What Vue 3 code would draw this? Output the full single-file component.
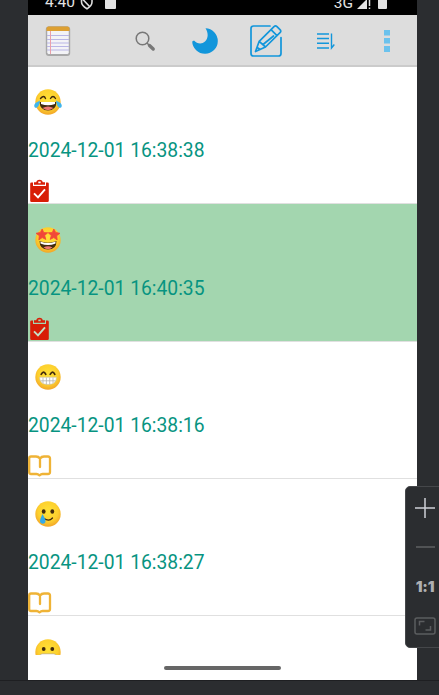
<script setup>
const notes = [
  { mood: 'joy', date: '2024-12-01 16:38:38', kind: 'task' },
  { mood: 'star', date: '2024-12-01 16:40:35', kind: 'task', selected: true },
  { mood: 'beam', date: '2024-12-01 16:38:16', kind: 'book' },
  { mood: 'tear', date: '2024-12-01 16:38:27', kind: 'book' },
  { mood: 'grimace' },
]
</script>

<template>
  <div class="emulator">
    <main class="screen">
      <header class="status">
        <span class="clock">4:40</span>
        <svg class="blocked" width="14" height="15" viewBox="0 0 14 15" fill="none" stroke="#ddd" stroke-width="1.6">
          <path d="M1.500 3.500 7 1l5 2.500V7c0 3-2 5-5 6.800C4 12 1.500 10 1.500 7ZM2.500 4l7.500 8" />
        </svg>
        <i class="card"></i>
        <span class="network">3G</span>
        <svg class="signal" width="14" height="12" viewBox="0 0 14 12">
          <path d="M0 11 10 1v10Z" fill="#e5e5e5" />
          <path d="M12.500 2v6M12.500 9.500v1.500" stroke="#e5e5e5" stroke-width="1.500" />
        </svg>
        <i class="battery"></i>
      </header>

      <nav class="toolbar">
        <svg width="26" height="32" viewBox="0 0 26 32">
          <rect x=".8" y="1.500" width="24.400" height="29.500" rx="3" fill="#858585" opacity=".6" />
          <rect x="1.800" y="2" width="22.400" height="27.500" rx="2" fill="#f3f3f6" stroke="#999" stroke-width=".7" />
          <path d="M1.500 6V3.500q0-2 2-2h19q2 0 2 2V6Z" fill="#dda032" />
          <path d="M2 10.500h22M2 14.500h22M2 18h22M2 21.500h22M2 25h22" stroke="#b9b6e6" />
          <path d="M5.500 6v23" stroke="#eba0aa" />
        </svg>
        <svg width="22" height="22" viewBox="0 0 22 22" fill="none" stroke="#777">
          <circle cx="8.500" cy="8.500" r="6.300" stroke-width="1.500" />
          <path d="m13 13 2.500 2.500" stroke-width="1.500" />
          <path d="m15.500 15.500 3.700 3.500" stroke-width="3.400" stroke-linecap="round" />
        </svg>
        <svg width="28" height="28" viewBox="0 0 28 28">
          <path d="M14.500 1.200A12.800 12.800 0 1 1 1.200 14.500L3 13.500C6 17 11 17.500 14 14.500 17.500 11 17.500 6 14.500 1.200Z" fill="#1296db" />
        </svg>
        <svg width="34" height="34" viewBox="0 0 34 34" fill="none" stroke="#1296db" stroke-width="1.700" stroke-linejoin="round" stroke-linecap="round">
          <path d="M21 2H4.500Q2 2 2 4.500v25Q2 32 4.500 32h25q2.500 0 2.500-2.500V13.500" />
          <path d="m6.500 27.500 3.700-10.200L25 2.700q1.500-1.500 3 0l3 3q1.500 1.500 0 3L16.500 23ZM22 5.700l6 6M10.200 17.300l6.300 5.700M24.500 12 14 20.500M9 24l2 1.500" />
        </svg>
        <svg width="20" height="18" viewBox="0 0 20 18" fill="none" stroke="#1296db" stroke-width="1.400">
          <path d="M1 2h12M1 6.500h12M1 11.300h12M1 16h12M15.500 1.500v14.500L18.300 12.500" />
        </svg>
        <svg width="8" height="24" viewBox="0 0 8 24" fill="#6bc2ed">
          <path d="M1 1h6v5.500H1zM1 9h6v5.500H1zM1 17h6v6H1z" />
        </svg>
      </nav>

      <section class="list">
        <article v-for="note in notes" :key="note.mood" class="note" :class="{ selected: note.selected }">
          <svg class="face" width="28" height="28" viewBox="0 0 28 28">
            <defs>
              <radialGradient :id="note.mood" cx=".5" cy=".4" r=".6">
                <stop offset="0" stop-color="#ffe236" />
                <stop offset=".65" stop-color="#fdd02e" />
                <stop offset="1" stop-color="#f2a629" />
              </radialGradient>
            </defs>
            <circle cx="14" cy="14" r="12.700" :fill="`url(#${note.mood})`" />
            <g v-if="note.mood === 'joy'">
              <path d="M6.500 10.500q3.500-4 5 0M16.500 10.500q2.500-4 5 0" fill="none" stroke="#422b0d" stroke-width="1.400" stroke-linecap="round" />
              <path d="M5.500 14h17q-.5 8.500-8.500 8.500T5.500 14Z" fill="#422b0d" />
              <path d="M7 14h14v2q-7 2.500-14 0Z" fill="#fff" />
              <path d="M8.500 20q5.500-3 11 0-5.500 4.300-11 0Z" fill="#ed7770" />
              <path d="M6 12.500q-1 7-4 7.500-2.500-.5-1.500-3.500 1-2 5.500-4ZM22 12.500q1 7 4 7.500 2.500-.5 1.500-3.500-1-2-5.500-4Z" fill="#40b5ed" />
            </g>
            <g v-else-if="note.mood === 'star'">
              <path d="m8.200 3 1.500 3.600 4 .2-3 2.700 1.100 3.900-3.600-1.800-3.400 2.300.5-4.200L2 7.300l4.300-.8ZM19.800 3l-1.500 3.600-4 .2 3 2.700-1.100 3.900 3.600-1.800 3.400 2.300-.5-4.200L26 7.300l-4.300-.8Z" fill="#f14838" stroke="#f14838" stroke-width=".8" stroke-linejoin="round" />
              <path d="M5.500 15q8.500 3.500 17 0 0 8.500-8.500 8.500T5.500 15Z" fill="#422b0d" />
              <path d="M6.500 15.500q7.500 3 15 0v2q-7.500 3-15 0Z" fill="#fff" />
              <path d="M9.500 21.500q4.500-2.500 9 0-4.500 3.500-9 0Z" fill="#ed7770" />
            </g>
            <g v-else-if="note.mood === 'beam'">
              <path d="M7.200 11.300q2.500-4.500 4.600 0M16.200 11.300q2.500-4.500 4.600 0" fill="none" stroke="#422b0d" stroke-width="1.700" stroke-linecap="round" />
              <path d="M5.500 14.200h17q0 7.300-8.500 7.300t-8.500-7.300Z" fill="#fff" stroke="#c9bda5" stroke-width=".6" />
              <path d="M6.500 17.800h15M9 14.500v5.500M12.400 14.500v7M15.700 14.500v7M19 14.500v5.500" stroke="#b4b4ae" stroke-width=".8" />
            </g>
            <g v-else-if="note.mood === 'tear'">
              <ellipse cx="9.700" cy="11.500" rx="1.900" ry="2.300" fill="#422b0d" />
              <ellipse cx="18.300" cy="11.500" rx="1.900" ry="2.300" fill="#422b0d" />
              <path d="M10 18.500q5 3.500 8.500-.5" fill="none" stroke="#422b0d" stroke-width="1.300" stroke-linecap="round" />
              <path d="M8.500 14q3 5 3 7 0 2.700-2.700 2.700T6 21q0-2 2.500-7Z" fill="#35a9e8" />
            </g>
            <g v-else>
              <ellipse cx="9.700" cy="11" rx="1.900" ry="2.100" fill="#422b0d" />
              <ellipse cx="18.300" cy="11" rx="1.900" ry="2.100" fill="#422b0d" />
              <rect x="5.500" y="15.800" width="17" height="7" rx="3" fill="#fff" stroke="#a08a60" stroke-width=".5" />
            </g>
          </svg>
          <time v-if="note.date" class="date">{{ note.date }}</time>
          <svg v-if="note.kind === 'task'" class="kind" width="24" height="24" viewBox="0 0 24 24">
            <path fill="#d81e06" fill-rule="evenodd" d="M3.500 3.500H5V7h13V3.500h1.500q1.300 0 1.300 1.300v17q0 1.300-1.300 1.300h-16q-1.300 0-1.300-1.300v-17Q2.200 3.500 3.500 3.500ZM6 5.700V3.200h2.300Q8.500.7 11.500.7t3.200 2.500H17v2.500ZM10.300 2.500v1.800h2.400V2.500Z" />
            <path d="m6 14.300 4 4 7-8" fill="none" :stroke="note.selected ? '#c4e2c6' : '#fff'" stroke-width="1.900" />
          </svg>
          <svg v-else-if="note.kind" class="kind" width="24" height="24" viewBox="0 0 24 24" fill="none" stroke="#efb336" stroke-width="2.300" stroke-linejoin="round" stroke-linecap="round">
            <path d="M12 13V4.500q-1.500-2-4-2H3Q1.200 2.500 1.200 4.500v13.500q0 2 1.800 2h5.500q1.500 0 3 1.300Q13 20 14.500 20H20q2 0 2-2V4.500q0-2-2-2h-4q-2.500 0-4 2" />
          </svg>
        </article>
      </section>
      <footer class="gesture"><i></i></footer>
    </main>
    <footer class="base"></footer>

    <aside class="zoom">
      <svg width="22" height="22" viewBox="0 0 22 22" stroke="#ced0d6" stroke-width="1.500"><path d="M1 11h20M11 1v20" /></svg>
      <i class="minus"></i>
      <b class="ratio">1:1</b>
      <svg width="22" height="18" viewBox="0 0 22 18" fill="none" stroke="#5b5d5f" stroke-width="1.500">
        <rect x="1" y="1" width="20" height="16" rx="2" />
        <path d="M5.500 8.500v-4h5M16.500 9v4h-5" />
      </svg>
    </aside>
  </div>
</template>

<style>
body { margin: 0; overflow: hidden; background: #2b2d30; }
</style>

<style scoped>
.emulator { width: 439px; height: 695px; position: relative; overflow: hidden; background: #2b2d30; font-family: Roboto, sans-serif; }
.screen { width: 389px; height: 680px; margin-left: 28px; background: #fff; display: flex; flex-direction: column; }
.status { height: 15px; flex: none; background: #000; color: #e3e3e3; display: flex; align-items: flex-end; overflow: hidden; box-sizing: border-box; padding: 0 30px 0 17px; font-size: 15.5px; }
.clock, .network { line-height: 18px; margin-bottom: 4px; }
.network { margin-left: auto; margin-bottom: 3px; }
.blocked { margin: 0 0 5px 5px; }
.card { width: 11px; height: 12px; margin: 0 0 6px 11px; background: #e3e3e3; border-radius: 1px; }
.signal { margin: 0 0 5px 4px; }
.battery { width: 9px; height: 12px; margin: 0 0 6px 7px; background: #e3e3e3; border-radius: 1px; }
.toolbar { height: 52px; flex: none; box-sizing: border-box; display: grid; grid-template-columns: 60px 26.500px repeat(5, 60.500px); justify-items: center; align-items: center; background: #ddd; border-bottom: 2px solid #cbcbcb; padding-top: 2px; }
.toolbar svg { display: block; }
.toolbar svg:nth-child(2) { grid-column: 3; }
.list { height: 588px; flex: none; overflow: hidden; }
.note { height: 137.330px; box-sizing: border-box; border-bottom: 1px solid #e0e0e0; display: flex; flex-direction: column; align-items: flex-start; }
.note:last-child { border: 0; }
.selected { background: #a3d6af; }
.face { flex: none; margin: 21.200px 0 0 6px; }
.date { color: #079481; font-size: 19.300px; line-height: 24px; margin-top: 23px; white-space: nowrap; }
.kind { flex: none; margin-top: 16px; }
.gesture { height: 25px; display: flex; justify-content: center; align-items: center; }
.gesture i { width: 117px; height: 4px; border-radius: 2px; background: #666; }
.base { height: 15px; box-sizing: border-box; border-top: 1px solid #1e1f22; }
.zoom { position: absolute; left: 405px; top: 486px; width: 40px; height: 162px; box-sizing: border-box; border: 1px solid #45474a; border-radius: 5px; background: #2b2d30; display: flex; flex-direction: column; align-items: center; padding: 10px 0 0; }
.zoom svg { display: block; flex: none; }
.minus { width: 19px; height: 2px; background: #515355; margin: 27px 0 29px; }
.ratio { color: #afb0b2; font: 900 15px/20px Inter, sans-serif; letter-spacing: -.3px; margin-bottom: 20px; }
</style>
